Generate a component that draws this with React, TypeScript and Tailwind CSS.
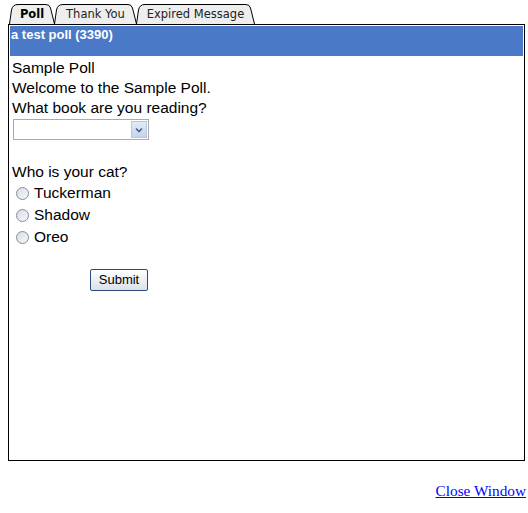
import React from "react";

// tab outline: rounded left shoulder, slanted right side
function TabShape({ w }: { w: number }) {
  const d = `M0.5,20 L2.5,6 Q3.5,0.5 9,0.5 L${w - 9},0.5 Q${w - 5.5},0.5 ${w - 4.5},4 L${w - 0.5},20`;
  return (
    <svg
      className="absolute inset-0"
      width={w}
      height={20}
      viewBox={`0 0 ${w} 20`}
    >
      <path d={d} fill="#eeeeee" stroke="#000" strokeWidth={1} />
    </svg>
  );
}

const tabs = [
  { label: "Poll", w: 46, active: true },
  { label: "Thank You", w: 83, active: false },
  { label: "Expired Message", w: 119, active: false },
];

const cats = ["Tuckerman", "Shadow", "Oreo"];

function Radio() {
  return (
    <span className="inline-block w-[13px] h-[13px] rounded-full border border-[#7b8fa8] bg-gradient-to-br from-[#d8dce2] to-[#f8f8f8] mr-[5px] shrink-0" />
  );
}

export default function App() {
  return (
    <div className="w-[528px] h-[513px] bg-white px-2 pt-1 font-['Liberation_Sans',Arial,sans-serif]">
      {/* Tabs */}
      <div className="flex h-[20px] pl-px">
        {tabs.map((t, i) => (
          <div
            key={t.label}
            className={`relative h-[20px] ${i > 0 ? "-ml-[1px]" : ""}`}
            style={{ width: t.w }}
          >
            <TabShape w={t.w} />
            <span
              className={`relative flex h-full items-center justify-center pt-[2px] text-[11.5px] font-['DejaVu_Sans',Verdana,sans-serif] ${
                t.active ? "font-bold text-black" : "text-[#222]"
              }`}
            >
              {t.label}
            </span>
          </div>
        ))}
      </div>

      {/* Panel */}
      <div className="w-[517px] h-[437px] border border-black p-px">
        <div className="h-[30px] bg-[#4a79c8] text-white text-[13px] font-bold leading-[16px] pl-px pt-px">
          a test poll (3390)
        </div>
        <div className="pl-[2px] pt-[2px] text-[15.5px] leading-[20px] text-black">
          <div>Sample Poll</div>
          <div>Welcome to the Sample Poll.</div>
          <div>What book are you reading?</div>
          <div className="mt-[1px] ml-px flex w-[136px] h-[21px] border border-[#a5acb5] bg-white">
            <div className="flex-1" />
            <div className="w-[16px] m-px flex items-center justify-center border border-[#b7c7dc] bg-gradient-to-b from-[#e1ebf8] to-[#c4d5ec]">
              <svg width="8" height="6" viewBox="0 0 8 6">
                <path d="M1,1.5 L4,4.5 L7,1.5" fill="none" stroke="#4d6185" strokeWidth="1.6" />
              </svg>
            </div>
          </div>
          <div className="h-[21px]" />
          <div className="mt-[1px]">Who is your cat?</div>
          <div className="flex flex-col pl-[4px]">
            {cats.map((c) => (
              <label key={c} className="flex items-center h-[22px]">
                <Radio />
                {c}
              </label>
            ))}
          </div>
          <div className="pl-[78px] pt-[21px]">
            <button className="w-[58px] h-[22px] border border-[#2c4a7a] rounded-[2px] bg-gradient-to-b from-[#ffffff] to-[#d9e1ea] text-[13px] leading-[18px] text-black font-['Liberation_Sans',Arial,sans-serif]">
              Submit
            </button>
          </div>
        </div>
      </div>

      {/* Footer link */}
      <div className="flex justify-end mt-[21px] -mr-[6px]">
        <a
          href="#"
          className="text-[15.3px] leading-[18px] text-[#0000ff] underline font-['Liberation_Serif','Times_New_Roman',serif]"
        >
          Close Window
        </a>
      </div>
    </div>
  );
}
